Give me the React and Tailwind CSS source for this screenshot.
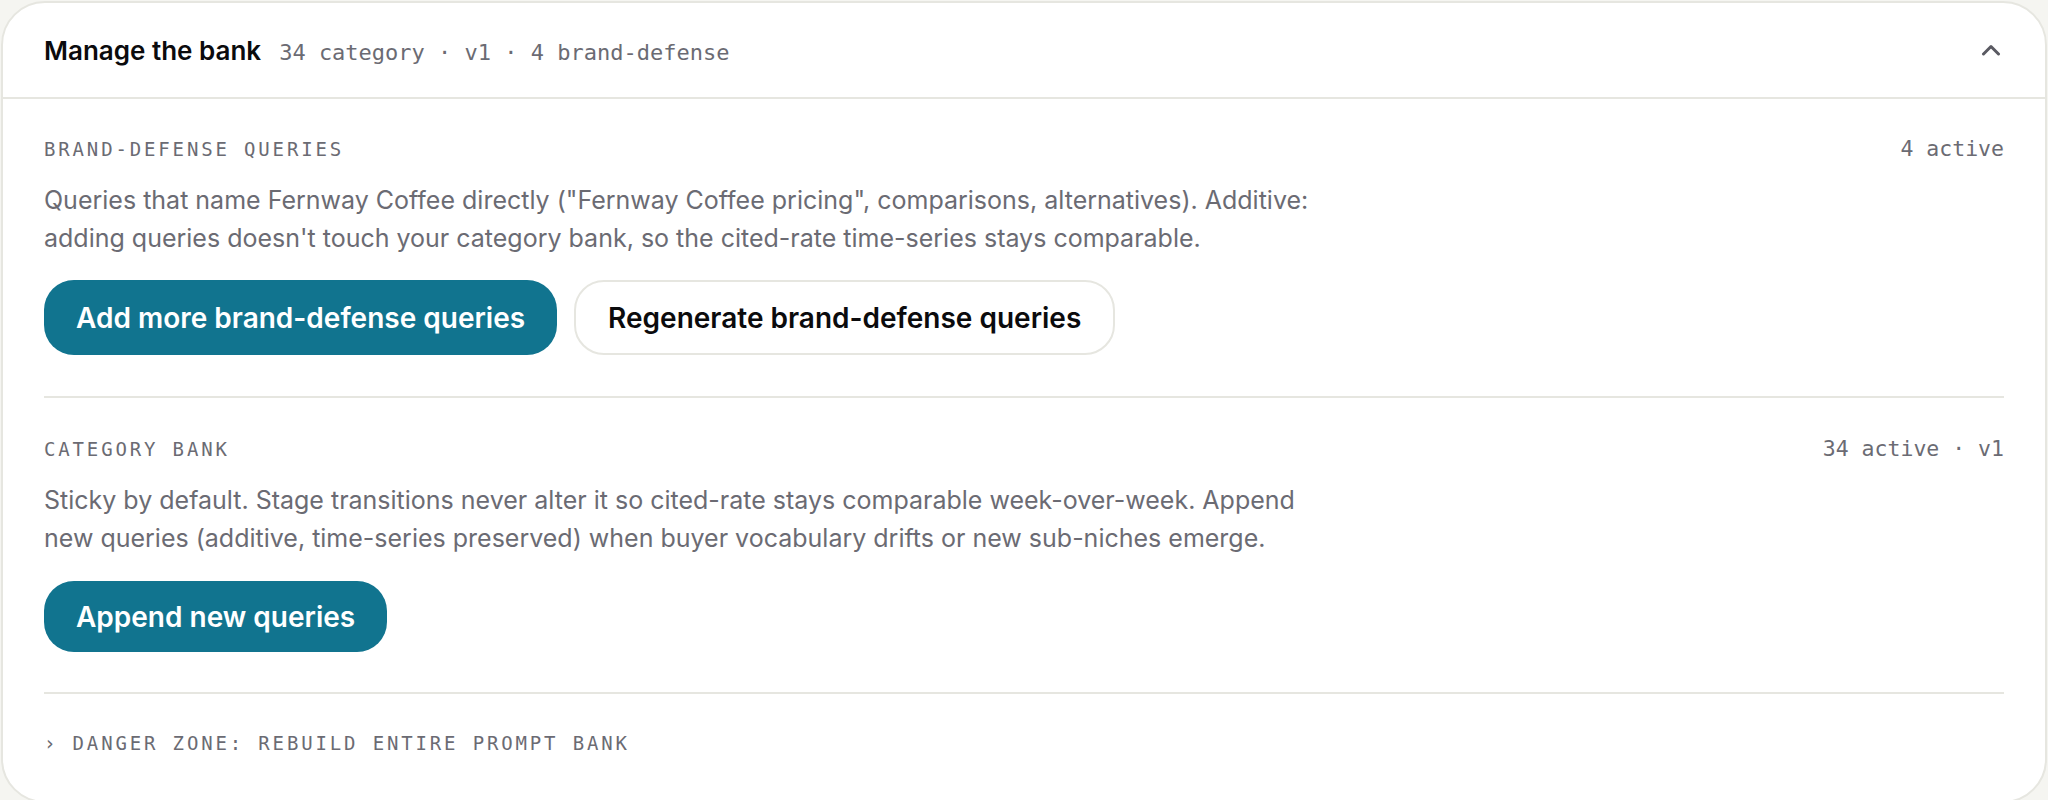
import React from "react";

const mono = "font-['DejaVu_Sans_Mono','Liberation_Mono',monospace]";
const sans = "font-['Inter','Noto_Sans',sans-serif]";

function ChevronUp() {
  return (
    <svg width="20" height="12" viewBox="0 0 20 12" fill="none" stroke="#5a5a62" strokeWidth="3" strokeLinecap="round" strokeLinejoin="round">
      <path d="M2.5 10L10 2.5L17.5 10" />
    </svg>
  );
}

export default function App() {
  return (
    <div className={`min-h-[800px] bg-[#f5f5f1] p-px ${sans}`}>
      <div className="rounded-[44px] border-2 border-[#e6e6e0] bg-white">
        <div className="flex h-[96px] items-center justify-between border-b-2 border-[#e6e6e0] pl-[41px] pr-[44px]">
          <div className="flex items-baseline gap-[18px]">
            <span className="text-[26px] font-semibold text-[#0b0b0d]">Manage the bank</span>
            <span className={`${mono} text-[22px] text-[#6b6b73]`}>34 category · v1 · 4 brand-defense</span>
          </div>
          <ChevronUp />
        </div>
        <div className="px-[41px]">
          <div className="border-b-2 border-[#e6e6e0] pb-[41px] pt-[36px]">
            <div className="flex items-center justify-between">
              <span className={`${mono} text-[19px] uppercase leading-[28px] tracking-[0.15em] text-[#6b6b73]`}>Brand-defense queries</span>
              <span className={`${mono} text-[21.5px] leading-[28px] text-[#6b6b73]`}>4 active</span>
            </div>
            <p className="mt-[18px] max-w-[1290px] text-[25px] leading-[38px] text-[#6b6b73]">
              Queries that name Fernway Coffee directly ("Fernway Coffee pricing", comparisons, alternatives). Additive: adding queries doesn't touch your category bank, so the cited-rate time-series stays comparable.
            </p>
            <div className="mt-[23px] flex gap-[17px]">
              <button className="h-[75px] rounded-[30px] bg-[#11748f] px-[32px] text-[28px] font-semibold text-white">Add more brand-defense queries</button>
              <button className="h-[75px] rounded-[30px] border-2 border-[#e6e6e0] bg-white px-[32px] text-[28px] font-semibold text-[#0b0b0d]">Regenerate brand-defense queries</button>
            </div>
          </div>
          <div className="border-b-2 border-[#e6e6e0] pb-[40px] pt-[37px]">
            <div className="flex items-center justify-between">
              <span className={`${mono} text-[19px] uppercase leading-[28px] tracking-[0.15em] text-[#6b6b73]`}>Category bank</span>
              <span className={`${mono} text-[21.5px] leading-[28px] text-[#6b6b73]`}>34 active · v1</span>
            </div>
            <p className="mt-[18px] max-w-[1290px] text-[25px] leading-[38px] text-[#6b6b73]">
              Sticky by default. Stage transitions never alter it so cited-rate stays comparable week-over-week. Append new queries (additive, time-series preserved) when buyer vocabulary drifts or new sub-niches emerge.
            </p>
            <div className="mt-[24px] flex">
              <button className="h-[71px] rounded-[30px] bg-[#11748f] px-[32px] text-[28px] font-semibold text-white">Append new queries</button>
            </div>
          </div>
          <div className={`${mono} pb-[44px] pt-[35px] text-[19px] uppercase leading-[28px] tracking-[0.15em] text-[#6b6b73]`}>
            › Danger zone: rebuild entire prompt bank
          </div>
        </div>
      </div>
    </div>
  );
}
